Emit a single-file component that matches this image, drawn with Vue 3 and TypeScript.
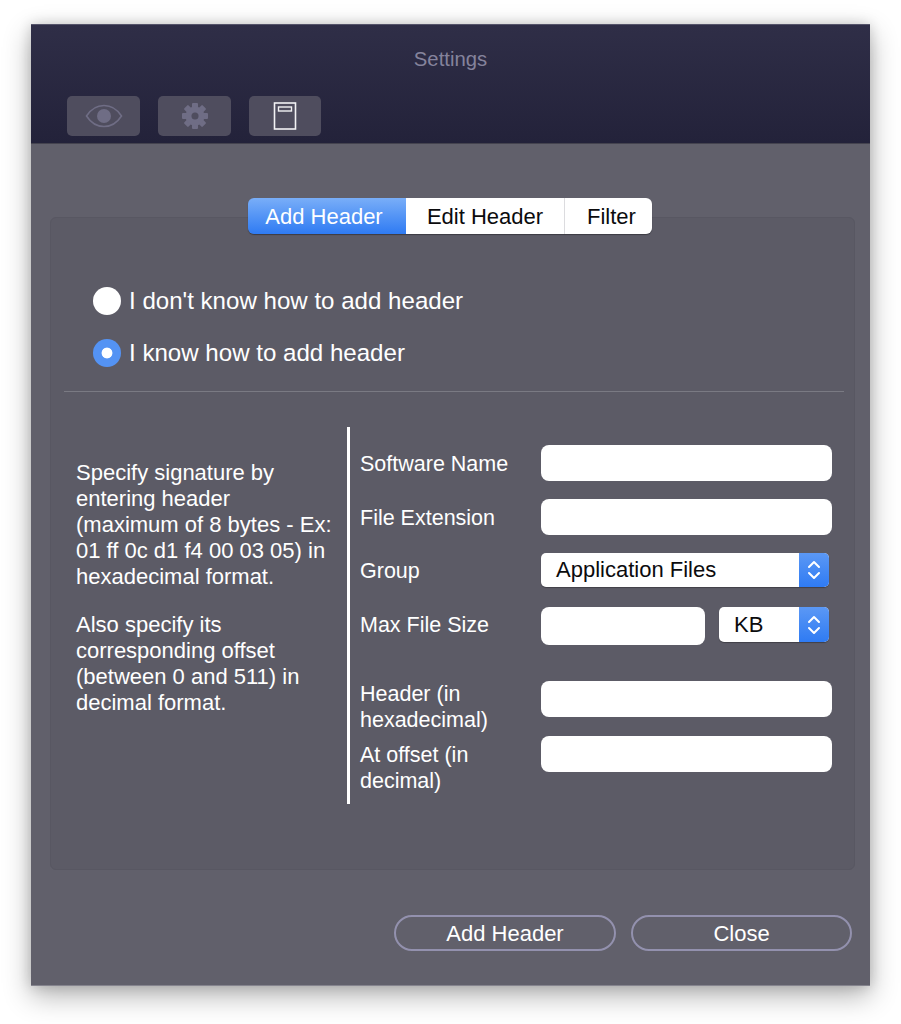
<script setup lang="ts">
interface Row { label: string; kind: 'input' | 'select' | 'size'; value?: string; tall?: boolean }
const tabs = ['Add Header', 'Edit Header', 'Filter']
const rows: Row[] = [
  { label: 'Software Name', kind: 'input' },
  { label: 'File Extension', kind: 'input' },
  { label: 'Group', kind: 'select', value: 'Application Files' },
  { label: 'Max File Size', kind: 'size' },
  { label: 'Header (in hexadecimal)', kind: 'input', tall: true },
  { label: 'At offset (in decimal)', kind: 'input', tall: true },
]
</script>

<template>
  <div class="page">
    <div class="window">
      <header class="titlebar">
        <div class="title">Settings</div>
        <div class="tools">
          <div class="tool">
            <svg width="38" height="24" viewBox="0 0 38 24" fill="none">
              <path d="M1.500 12C6 5 12 1.500 19 1.500S32 5 36.500 12C32 19 26 22.500 19 22.500S6 19 1.500 12Z" stroke="#6f6d85" stroke-width="1.600"/>
              <circle cx="19" cy="12" r="7" fill="#6f6d85"/>
            </svg>
          </div>
          <div class="tool">
            <svg width="28" height="28" viewBox="0 0 28 28">
              <g fill="#6f6d85">
                <rect x="11" y="1" width="6" height="26" rx="1"/>
                <rect x="11" y="1" width="6" height="26" rx="1" transform="rotate(45 14 14)"/>
                <rect x="11" y="1" width="6" height="26" rx="1" transform="rotate(90 14 14)"/>
                <rect x="11" y="1" width="6" height="26" rx="1" transform="rotate(135 14 14)"/>
              </g>
              <circle cx="14" cy="14" r="6.500" fill="none" stroke="#6f6d85" stroke-width="6"/>
              <circle cx="14" cy="14" r="3.500" fill="#4f4d5e"/>
            </svg>
          </div>
          <div class="tool">
            <svg width="24" height="28" viewBox="0 0 24 28" fill="none">
              <rect x="1.500" y="1" width="21" height="26" stroke="#f2f2f4" stroke-width="1.600"/>
              <rect x="5.500" y="5" width="13" height="4" stroke="#f2f2f4" stroke-width="1.400"/>
            </svg>
          </div>
        </div>
      </header>

      <main class="body">
        <div class="segments">
          <div v-for="(t, i) in tabs" :key="t" class="segment" :class="{ active: i === 0 }">{{ t }}</div>
        </div>

        <section class="panel">
          <div class="choices">
            <label class="choice"><span class="radio"></span>I don't know how to add header</label>
            <label class="choice"><span class="radio on"></span>I know how to add header</label>
          </div>
          <div class="divider"></div>

          <div class="columns">
            <div class="help">
              <p>Specify signature by entering header (maximum of 8 bytes - Ex: 01 ff 0c d1 f4 00 03 05) in hexadecimal format.</p>
              <p>Also specify its corresponding offset (between 0 and 511) in decimal format.</p>
            </div>
            <div class="form">
              <div v-for="r in rows" :key="r.label" class="row" :class="{ tall: r.tall, gap: r.kind === 'size' }">
                <div class="label">{{ r.label }}</div>
                <div v-if="r.kind === 'input'" class="input"></div>
                <div v-else-if="r.kind === 'select'" class="select wide">
                  <span>{{ r.value }}</span>
                  <span class="stepper">
                    <svg width="14" height="24" viewBox="0 0 14 24" fill="none" stroke="#fff" stroke-width="2" stroke-linecap="round" stroke-linejoin="round"><path d="M2 9l5-5 5 5M2 15l5 5 5-5"/></svg>
                  </span>
                </div>
                <div v-else class="size">
                  <div class="input short"></div>
                  <div class="select unit">
                    <span>KB</span>
                    <span class="stepper">
                      <svg width="14" height="24" viewBox="0 0 14 24" fill="none" stroke="#fff" stroke-width="2" stroke-linecap="round" stroke-linejoin="round"><path d="M2 9l5-5 5 5M2 15l5 5 5-5"/></svg>
                    </span>
                  </div>
                </div>
              </div>
            </div>
          </div>
        </section>

        <footer class="actions">
          <button class="action add">Add Header</button>
          <button class="action close">Close</button>
        </footer>
      </main>
    </div>
  </div>
</template>

<style>
html, body { background: #fff; }
</style>

<style scoped>
.page {
  width: 901px;
  height: 1024px;
  box-sizing: border-box;
  padding: 24px 0 0 31px;
  overflow: hidden;
  background: #fff;
  font-family: "Liberation Sans", Arial, sans-serif;
}
.window {
  width: 839px;
  height: 962px;
  display: flex;
  flex-direction: column;
  box-shadow: 0 10px 26px rgba(0, 0, 0, 0.3), 0 0 12px rgba(0, 0, 0, 0.16);
}
.titlebar {
  height: 120px;
  box-sizing: border-box;
  padding: 23px 36px 0;
  background: linear-gradient(#2f2e47, #23223a);
  border-top: 1px solid #55546a;
  border-bottom: 1px solid #44434f;
}
.title {
  text-align: center;
  font-size: 20.300px;
  line-height: 22px;
  color: #85839c;
}
.tools {
  display: flex;
  gap: 18px;
  margin-top: 26px;
}
.tool {
  width: 73px;
  height: 40px;
  border-radius: 5px;
  background: #4f4d5e;
  display: flex;
  align-items: center;
  justify-content: center;
}
.tool:last-child { width: 72px; }
.body {
  flex: 1;
  position: relative;
  background: #61606b;
  display: flex;
  flex-direction: column;
  border-bottom: 1px solid #85848e;
  box-sizing: border-box;
}
.segments {
  display: flex;
  margin: 54px 0 0 217px;
  width: 404px;
  height: 36px;
  border-radius: 6px;
  position: relative;
  z-index: 1;
  overflow: hidden;
  box-shadow: 0 1px 1px rgba(0, 0, 0, 0.35);
}
.segment {
  background: #fff;
  color: #0b0b0d;
  font-size: 22px;
  line-height: 37px;
  text-align: center;
  border-right: 1px solid #dcdcdf;
  width: 159px;
  box-sizing: border-box;
}
.segment.active {
  width: 158px;
  color: #fff;
  border-right: 0;
  padding-right: 6px;
  background: linear-gradient(#79aef8, #2f7bf3);
}
.segment:last-child { border-right: 0; width: 87px; padding-left: 6px; }
.panel {
  margin: -17px 15px 0 19px;
  height: 653px;
  box-sizing: border-box;
  padding-top: 69px;
  background: #5c5b66;
  border: 1px solid #585762;
  border-radius: 6px;
  display: flex;
  flex-direction: column;
}
.choices {
  display: flex;
  flex-direction: column;
  gap: 24px;
  padding-left: 42px;
}
.choice {
  display: flex;
  align-items: center;
  gap: 8px;
  height: 28px;
  color: #fff;
  font-size: 24.100px;
  line-height: 28px;
}
.radio {
  width: 28px;
  height: 28px;
  border-radius: 50%;
  background: #fff;
  flex: none;
  box-sizing: border-box;
}
.radio.on {
  background: radial-gradient(circle, #fff 0 5px, #5493f4 5.800px);
}
.divider {
  height: 1px;
  margin: 24px 10px 0 13px;
  background: #7a7a83;
}
.columns {
  display: flex;
  margin: 35px 0 0 25px;
}
.help {
  width: 272px;
  height: 377px;
  box-sizing: border-box;
  padding-top: 33px;
  color: #fff;
  font-size: 22px;
  line-height: 26px;
  flex: none;
}
.help p { margin: 0 0 22px; width: 262px; }
.form {
  border-left: 3px solid #fff;
  height: 377px;
  margin-left: -1px;
  padding: 18px 0 0 10px;
  box-sizing: border-box;
  display: flex;
  flex-direction: column;
  gap: 18px;
}
.row {
  display: flex;
  align-items: center;
  width: 472px;
  height: 36px;
}
.row.gap { margin-bottom: 20px; }
.row.tall { margin-bottom: 1px; align-items: flex-start; }
.row.tall ~ .row.tall { margin-bottom: 0; }
.label {
  width: 181px;
  flex: none;
  color: #fff;
  font-size: 21.500px;
  line-height: 26px;
  box-sizing: border-box;
}
.row:nth-child(-n+2) .label { padding-top: 2px; }
.row.tall .label { padding-right: 30px; }
.row.tall ~ .row.tall .label { margin-top: 6px; }
.input {
  width: 291px;
  height: 36px;
  background: #fff;
  border-radius: 8px;
}
.input.short { width: 164px; height: 38px; }
.select {
  display: flex;
  align-items: center;
  justify-content: space-between;
  background: #fff;
  border-radius: 5px;
  color: #0b0b0d;
  font-size: 22px;
  overflow: hidden;
  box-shadow: 0 1px 1px rgba(0, 0, 0, 0.3);
}
.select.wide { width: 288px; height: 34px; padding-left: 15px; box-sizing: border-box; align-self: flex-start; }
.select.unit { width: 110px; height: 35px; padding-left: 15px; box-sizing: border-box; }
.stepper {
  width: 30px;
  height: 100%;
  flex: none;
  display: flex;
  align-items: center;
  justify-content: center;
  background: linear-gradient(#5b98f5, #2f7bf3);
}
.size {
  display: flex;
  align-items: flex-start;
  align-self: flex-start;
  gap: 14px;
}
.actions {
  display: flex;
  justify-content: flex-end;
  gap: 15px;
  padding: 45px 18px 0 0;
}
.action {
  width: 222px;
  height: 36px;
  box-sizing: border-box;
  background: transparent;
  border: 2px solid #9391ae;
  border-radius: 18px;
  color: #fff;
  font-family: inherit;
  font-size: 22px;
  line-height: 32px;
  padding: 1px 0 0;
}
.action.close { width: 221px; }
</style>
